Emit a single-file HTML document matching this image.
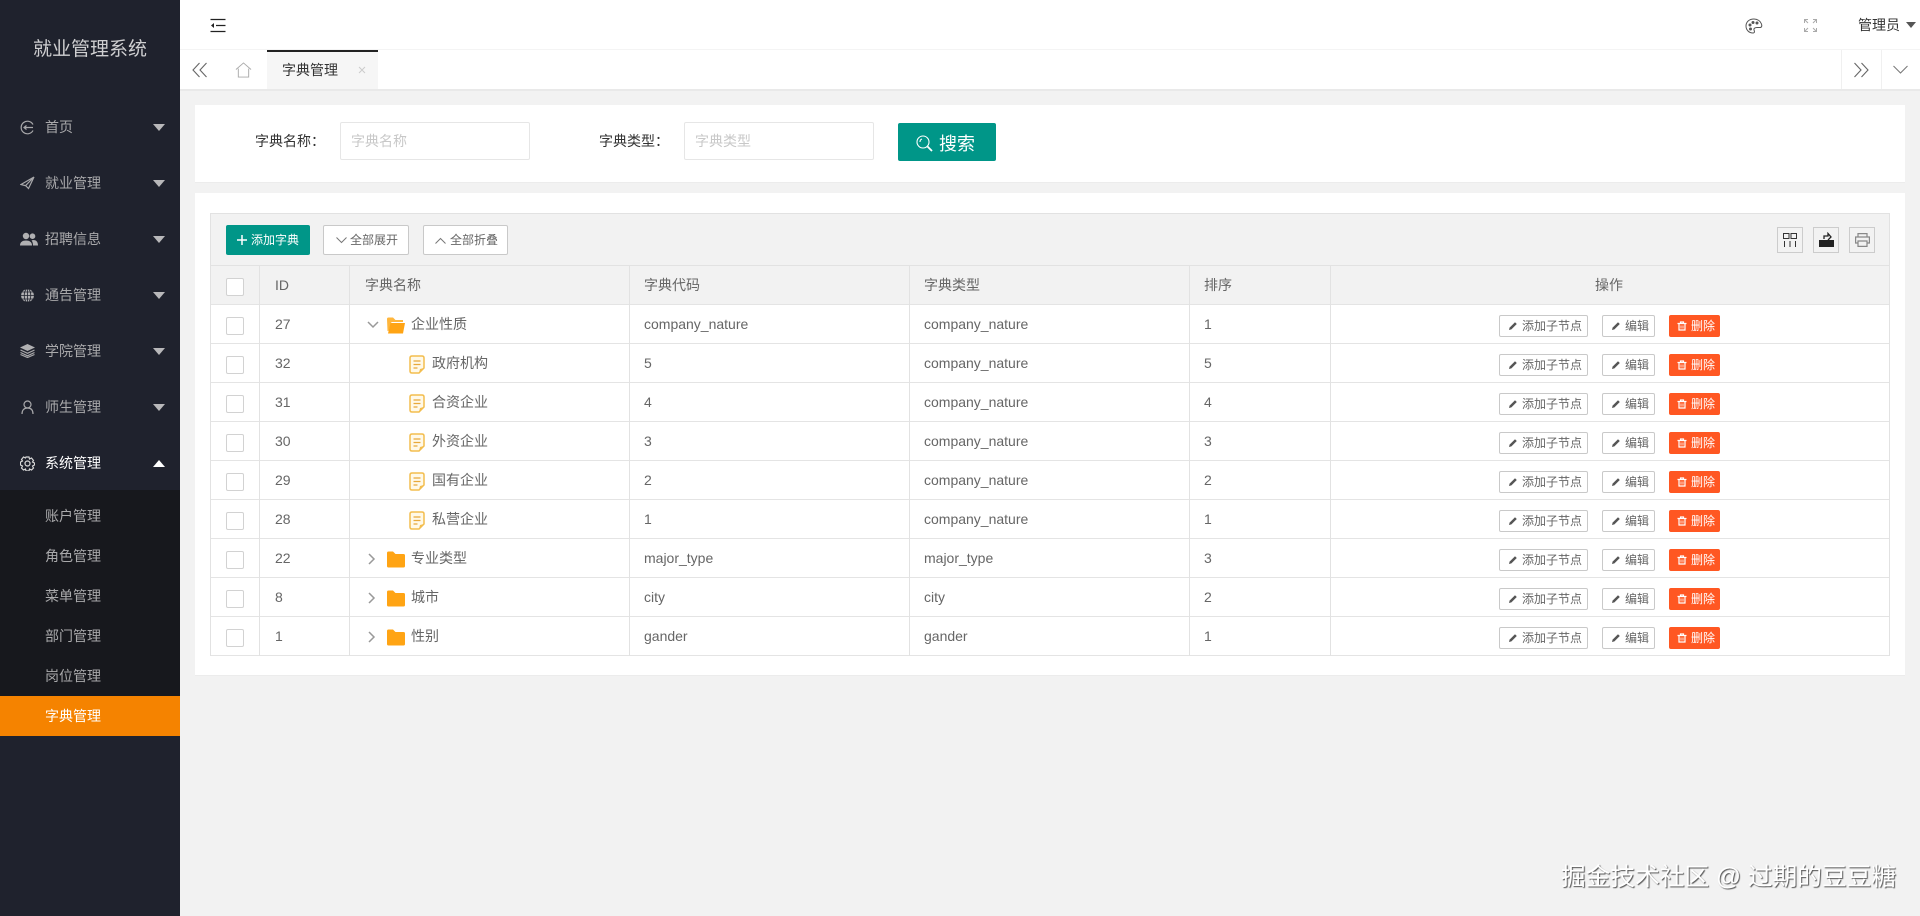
<!DOCTYPE html>
<html lang="zh-CN"><head><meta charset="utf-8"><title>字典管理</title>
<style>
*{box-sizing:border-box}
html,body{margin:0;padding:0;width:1920px;height:916px;overflow:hidden;background:#f2f2f2;font-family:"Liberation Sans","Noto Sans CJK SC",sans-serif;font-size:14px;color:#666}
.a{position:absolute}
#side{left:0;top:0;width:180px;height:916px;background:#1f222d}
.m{position:absolute;left:45px;color:#a9a9ab;line-height:20px;font-size:14px;white-space:nowrap}
.ca{position:absolute;left:153px;width:0;height:0;border-left:6.500px solid transparent;border-right:6.500px solid transparent;border-top:7px solid #b8b8ba}
.ic{position:absolute;left:20px;width:15px;height:15px;fill:none;stroke:#a8a8aa;stroke-width:1.200}
.r{position:absolute;left:210px;width:1680px;height:39px;border-bottom:1px solid #e4e4e4;line-height:39px;background:#fff;color:#666}
.r span{position:absolute;top:0;white-space:nowrap}
.cb{position:absolute;left:16px;top:12px;width:18px;height:18px;border:1px solid #d2d2d2;border-radius:2px;background:#fff}
.tr{position:absolute;width:12px;height:12px;fill:none;stroke:#999;stroke-width:1.500}
.fo{position:absolute;left:177px;top:12px;width:18px;height:17px}
.do{position:absolute;left:199px;top:11px;width:16px;height:19px}
.b{position:absolute;top:10px;height:22px;line-height:20px;font-size:12px;border:1px solid #c9c9c9;border-radius:2px;background:#fff;color:#666;white-space:nowrap}
.b span{position:absolute;top:0}
.b svg{position:absolute;left:8px;top:5px;width:10px;height:10px}
.del{background:#ff5722;border-color:#ff5722;color:#fff}
.tb{position:absolute;top:225px;height:30px;background:#fff;border:1px solid #c9c9c9;border-radius:2px;line-height:28px;font-size:12px;color:#666;white-space:nowrap}
.to{position:absolute;top:227px;width:26px;height:26px;border:1px solid #ccc;background:#f2f2f2}
.v{position:absolute;top:266px;width:1px;height:390px;background:#e2e2e2;z-index:3}
.h{position:absolute;top:266px;color:#666;line-height:39px;white-space:nowrap}
.inp{position:absolute;top:122px;width:190px;height:38px;border:1px solid #e6e6e6;border-radius:2px;background:#fff;color:#c8c8c8;line-height:36px;padding-left:10px;font-size:14px}
</style></head><body>
<svg width="0" height="0" style="position:absolute"><defs>
<symbol id="pen" viewBox="0 0 10 10"><path d="M1 9l.6-2.400L7 1.200l1.800 1.800L3.400 8.400z" fill="#555"/></symbol>
<symbol id="trash" viewBox="0 0 10 10"><path d="M.5 2.500h9M3.500 2V1h3v1M2 3v6h6V3" fill="none" stroke="#fff" stroke-width="1.200"/><path d="M4 4.500v3M6 4.500v3" stroke="#fff" stroke-width=".8"/></symbol>
<symbol id="fc" viewBox="0 0 18 17"><path d="M0 2q0-1.500 1.500-1.500h4.500l2.500 2.500h8q1.500 0 1.500 1.500v10.500q0 1.500-1.500 1.500h-15q-1.500 0-1.500-1.500z" fill="#ffa414"/></symbol>
<symbol id="fo" viewBox="0 0 18 17"><path d="M0 2q0-1.500 1.500-1.500h4.500l2.500 2.500h7.500v2h-11.500l-3 9h-1z" fill="#ffb63c"/><path d="M3.500 6h14.500l-2 10.500h-15z" fill="#ffa414"/></symbol>
<symbol id="doc" viewBox="0 0 16 19"><path d="M3 1h10q2 0 2 2v10l-5 5H3q-2 0-2-2V3q0-2 2-2z" fill="#fff9e8" stroke="#f3bd4e" stroke-width="1.500"/><path d="M4.500 6h7M4.500 9.500h7M4.500 13h4" stroke="#e8a93a" stroke-width="1.200"/><path d="M10 18l1-4 4-1z" fill="#f3bd4e"/></symbol>
</defs></svg>

<div class="a" id="side">
 <div class="a" style="left:0;top:37px;width:180px;text-align:center;color:#cfcfd1;font-size:19px;line-height:26px">就业管理系统</div>
 <svg class="ic" style="top:120px" viewBox="0 0 15 15"><path d="M13 4.500A6.300 6.300 0 1 0 13 10.500"/><path d="M4 7.500h9M6.500 5.500L4 7.500l2.500 2"/></svg><div class="m" style="top:117px">首页</div><div class="ca" style="top:124px"></div>
 <svg class="ic" style="top:176px" viewBox="0 0 15 15"><path d="M14 1L1 8.500l4.500 1.200L14 1 8.500 12.500 6 10"/></svg><div class="m" style="top:173px">就业管理</div><div class="ca" style="top:180px"></div>
 <svg class="ic" style="top:232px;left:20px;width:18px;stroke:none;fill:#b0b0b2" viewBox="0 0 18 15"><circle cx="6" cy="4" r="3.200"/><path d="M0 13.500c0-3.500 2.500-5 6-5s6 1.500 6 5z"/><circle cx="12.500" cy="4.200" r="2.800"/><path d="M13 8c3 0 5 1.500 5 5.500h-5c0-2-.5-4-1.500-5z"/></svg><div class="m" style="top:229px">招聘信息</div><div class="ca" style="top:236px"></div>
 <svg class="ic" style="top:288px;stroke:#1f222d;fill:#b0b0b2;stroke-width:.8" viewBox="0 0 15 15"><circle cx="7.500" cy="7.500" r="6.800"/><path d="M.7 7.500h13.600M2 4h11M2 11h11M7.500.7v13.600" fill="none"/><ellipse cx="7.500" cy="7.500" rx="3.300" ry="6.800" fill="none"/></svg><div class="m" style="top:285px">通告管理</div><div class="ca" style="top:292px"></div>
 <svg class="ic" style="top:343px" viewBox="0 0 15 15"><path d="M7.500 1L15 4.500 7.500 8 0 4.500z" fill="#b0b0b2" stroke="none"/><path d="M.5 7l7 3.300 7-3.300M.5 9.500l7 3.300 7-3.300M.5 11.500l7 3 7-3" stroke-width="1.200"/></svg><div class="m" style="top:341px">学院管理</div><div class="ca" style="top:348px"></div>
 <svg class="ic" style="top:400px" viewBox="0 0 15 15"><circle cx="7.500" cy="4.500" r="3.500"/><path d="M2 14c0-4 2-6 5.500-6S13 10 13 14"/></svg><div class="m" style="top:397px">师生管理</div><div class="ca" style="top:404px"></div>
 <div class="a" style="left:0;top:490px;width:180px;height:246px;background:#17181d"></div>
 <svg class="ic" style="top:456px;stroke:#d8d8d8" viewBox="0 0 15 15"><circle cx="7.500" cy="7.500" r="2.500"/><path d="M6 1h3l.5 2 2-1 2 2.500-1 1.500 2 1v2l-2 1 1 2-2 2-2-1-.5 2H6l-.5-2-2 1-2-2 1-2-2-1V6l2-1-1-1.500 2-2.500 2 1z"/></svg><div class="m" style="top:453px;color:#fff">系统管理</div><div class="a" style="left:153px;top:460px;width:0;height:0;border-left:6.500px solid transparent;border-right:6.500px solid transparent;border-bottom:7px solid #fff"></div>
 <div class="m" style="top:506px">账户管理</div>
 <div class="m" style="top:546px">角色管理</div>
 <div class="m" style="top:586px">菜单管理</div>
 <div class="m" style="top:626px">部门管理</div>
 <div class="m" style="top:666px">岗位管理</div>
 <div class="a" style="left:0;top:696px;width:180px;height:40px;background:#f58300"></div>
 <div class="m" style="top:706px;color:#fff">字典管理</div>
</div>

<!-- header -->
<div class="a" style="left:180px;top:0;width:1740px;height:50px;background:#fff;border-bottom:1px solid #f4f4f4"></div>
<svg class="a" style="left:210px;top:18px;width:16px;height:15px" viewBox="0 0 16 15" fill="none" stroke="#222" stroke-width="1.300"><path d="M.5 1.500h15M6 7.500h9.500M.5 13.500h15"/><path d="M4 5L1 7.500 4 10z" fill="#222" stroke="none"/></svg>
<svg class="a" style="left:1745px;top:18px;width:18px;height:16px" viewBox="0 0 18 16" fill="none" stroke="#555" stroke-width="1"><path d="M9 1C4 1 1 4 1 8c0 4 3 7 7 7 2 0 1.500-2 1-3-.5-1.500 1-2.500 3-2.500h3c2 0 2-2 1.500-3.500C15.500 3 12.500 1 9 1z"/><circle cx="5" cy="7" r="1" fill="#555"/><circle cx="8" cy="4.500" r="1" fill="#555"/><circle cx="12" cy="5" r="1" fill="#555"/><circle cx="5.500" cy="11" r="1" fill="#555"/></svg>
<svg class="a" style="left:1804px;top:19px;width:13px;height:13px" viewBox="0 0 13 13" fill="none" stroke="#aaa" stroke-width="1"><path d="M.5 4V.5H4M9 .5h3.500V4M12.500 9v3.500H9M4 12.500H.5V9M.5.5l3.500 3.500M12.500.5L9 4M12.500 12.500L9 9M.5 12.500L4 9"/></svg>
<div class="a" style="left:1858px;top:15px;line-height:20px;color:#333;font-size:14px">管理员</div>
<div class="a" style="left:1906px;top:22px;width:0;height:0;border-left:5.500px solid transparent;border-right:5.500px solid transparent;border-top:6px solid #555"></div>

<!-- tabs -->
<div class="a" style="left:180px;top:50px;width:1740px;height:41px;background:#fff;border-bottom:2px solid #e9e9e9"></div>
<svg class="a" style="left:192px;top:62px;width:16px;height:16px" viewBox="0 0 16 16" fill="none" stroke="#666" stroke-width="1.100"><path d="M7.500 1L1 8l6.500 7M14.500 1L8 8l6.500 7"/></svg>
<svg class="a" style="left:235px;top:62px;width:17px;height:16px" viewBox="0 0 18 17" fill="none" stroke="#aaa" stroke-width="1"><path d="M1 8l8-7 8 7M3.500 7v9h11V7"/></svg>
<div class="a" style="left:267px;top:50px;width:111px;height:39px;background:#f6f6f6;border-top:2px solid #222"></div>
<div class="a" style="left:282px;top:60px;line-height:20px;color:#333;font-size:14px">字典管理</div>
<svg class="a" style="left:358px;top:66px;width:8px;height:8px" viewBox="0 0 8 8" fill="none" stroke="#ccc" stroke-width="1"><path d="M1 1l6 6M7 1L1 7"/></svg>
<div class="a" style="left:1841px;top:50px;width:1px;height:39px;background:#f0f0f0"></div>
<div class="a" style="left:1881px;top:50px;width:1px;height:39px;background:#f0f0f0"></div>
<svg class="a" style="left:1853px;top:62px;width:16px;height:16px" viewBox="0 0 16 16" fill="none" stroke="#666" stroke-width="1.100"><path d="M1.500 1L8 8l-6.500 7M8.500 1L15 8l-6.500 7"/></svg>
<svg class="a" style="left:1893px;top:65px;width:15px;height:9px" viewBox="0 0 15 9" fill="none" stroke="#777" stroke-width="1"><path d="M.5 1L7.500 8l7-7"/></svg>

<!-- search card -->
<div class="a" style="left:195px;top:105px;width:1710px;height:78px;background:#fff;border-bottom:1px solid #ececec"></div>
<div class="a" style="left:255px;top:131px;line-height:20px;color:#333">字典名称：</div>
<div class="inp" style="left:340px">字典名称</div>
<div class="a" style="left:599px;top:131px;line-height:20px;color:#333">字典类型：</div>
<div class="inp" style="left:684px">字典类型</div>
<div class="a" style="left:898px;top:123px;width:98px;height:38px;background:#009688;border-radius:2px"></div>
<svg class="a" style="left:916px;top:135px;width:17px;height:17px" viewBox="0 0 17 17" fill="none" stroke="#fff" stroke-width="1.100"><circle cx="7" cy="7" r="6"/><path d="M11.500 11.500L16 16" stroke-width="1.800"/><path d="M4 7a3 3 0 0 1 2-3"/></svg>
<div class="a" style="left:939px;top:131px;line-height:26px;color:#fff;font-size:18px">搜索</div>

<!-- table card -->
<div class="a" style="left:195px;top:193px;width:1710px;height:483px;background:#fff;border-bottom:1px solid #ececec"></div>
<div class="a" style="left:210px;top:213px;width:1680px;height:53px;background:#f2f2f2;border:1px solid #e2e2e2"></div>
<div class="a" style="left:226px;top:225px;width:84px;height:30px;background:#009688;border-radius:2px;color:#fff;font-size:12px;line-height:30px;white-space:nowrap"><svg class="a" style="left:11px;top:10px;width:10px;height:10px" viewBox="0 0 10 10" stroke="#fff" stroke-width="1.500"><path d="M5 0v10M0 5h10"/></svg><span class="a" style="left:25px;top:0">添加字典</span></div>
<div class="tb" style="left:323px;width:86px"><svg class="a" style="left:12px;top:11px;width:11px;height:7px" viewBox="0 0 11 7" fill="none" stroke="#777"><path d="M.5.500l5 5 5-5"/></svg><span class="a" style="left:26px;top:0">全部展开</span></div>
<div class="tb" style="left:423px;width:85px"><svg class="a" style="left:11px;top:11px;width:11px;height:7px" viewBox="0 0 11 7" fill="none" stroke="#777"><path d="M.5 6.500l5-5 5 5"/></svg><span class="a" style="left:26px;top:0">全部折叠</span></div>
<div class="to" style="left:1777px"><svg class="a" style="left:5px;top:5px;width:14px;height:14px" viewBox="0 0 14 14" fill="none" stroke="#333" stroke-width="1"><path d="M.5.500h5.500v5H.5zM8 .500h5.500v5H8zM1.500 8v6M7 8v6M12.500 8v6"/></svg></div>
<div class="to" style="left:1813px"><svg class="a" style="left:5px;top:4px;width:15px;height:15px" viewBox="0 0 15 15"><path d="M0 8h15v7H0z" fill="#222"/><path d="M5 7V4h4V1.500L12 5 9 8" fill="none" stroke="#222" stroke-width="1.300"/></svg></div>
<div class="to" style="left:1849px"><svg class="a" style="left:5px;top:5px;width:15px;height:14px" viewBox="0 0 15 14" fill="none" stroke="#888" stroke-width="1.200"><path d="M3 4V.6h9V4M3 10H.6V4h13.800v6H12M3 8h9v5.400H3z"/></svg></div>

<!-- head -->
<div class="a" style="left:210px;top:266px;width:1680px;height:39px;background:#f2f2f2;border-bottom:1px solid #e4e4e4"></div>
<div class="a" style="left:226px;top:278px;width:18px;height:18px;border:1px solid #d2d2d2;border-radius:2px;background:#fff"></div>
<div class="h" style="left:275px">ID</div>
<div class="h" style="left:365px">字典名称</div>
<div class="h" style="left:644px">字典代码</div>
<div class="h" style="left:924px">字典类型</div>
<div class="h" style="left:1204px">排序</div>
<div class="h" style="left:1595px">操作</div>
<div class="v" style="left:210px"></div><div class="v" style="left:259px"></div><div class="v" style="left:349px"></div><div class="v" style="left:629px"></div><div class="v" style="left:909px"></div><div class="v" style="left:1189px"></div><div class="v" style="left:1330px"></div><div class="v" style="left:1889px"></div>

<!-- rows -->
<div class="r" style="top:305px"><i class="cb"></i><span style="left:65px">27</span><svg class="tr" style="left:157px;top:14px" viewBox="0 0 12 12"><path d="M1 3l5 5 5-5"/></svg><svg class="fo"><use href="#fo"/></svg><span style="left:201px">企业性质</span><span style="left:434px">company_nature</span><span style="left:714px">company_nature</span><span style="left:994px">1</span>
<div class="b" style="left:1289px;width:89px"><svg><use href="#pen"/></svg><span style="left:22px">添加子节点</span></div><div class="b" style="left:1392px;width:53px"><svg><use href="#pen"/></svg><span style="left:22px">编辑</span></div><div class="b del" style="left:1459px;width:51px"><svg style="left:7px"><use href="#trash"/></svg><span style="left:21px">删除</span></div></div>

<div class="r" style="top:344px"><i class="cb"></i><span style="left:65px">32</span><svg class="do"><use href="#doc"/></svg><span style="left:222px">政府机构</span><span style="left:434px">5</span><span style="left:714px">company_nature</span><span style="left:994px">5</span>
<div class="b" style="left:1289px;width:89px"><svg><use href="#pen"/></svg><span style="left:22px">添加子节点</span></div><div class="b" style="left:1392px;width:53px"><svg><use href="#pen"/></svg><span style="left:22px">编辑</span></div><div class="b del" style="left:1459px;width:51px"><svg style="left:7px"><use href="#trash"/></svg><span style="left:21px">删除</span></div></div>

<div class="r" style="top:383px"><i class="cb"></i><span style="left:65px">31</span><svg class="do"><use href="#doc"/></svg><span style="left:222px">合资企业</span><span style="left:434px">4</span><span style="left:714px">company_nature</span><span style="left:994px">4</span>
<div class="b" style="left:1289px;width:89px"><svg><use href="#pen"/></svg><span style="left:22px">添加子节点</span></div><div class="b" style="left:1392px;width:53px"><svg><use href="#pen"/></svg><span style="left:22px">编辑</span></div><div class="b del" style="left:1459px;width:51px"><svg style="left:7px"><use href="#trash"/></svg><span style="left:21px">删除</span></div></div>

<div class="r" style="top:422px"><i class="cb"></i><span style="left:65px">30</span><svg class="do"><use href="#doc"/></svg><span style="left:222px">外资企业</span><span style="left:434px">3</span><span style="left:714px">company_nature</span><span style="left:994px">3</span>
<div class="b" style="left:1289px;width:89px"><svg><use href="#pen"/></svg><span style="left:22px">添加子节点</span></div><div class="b" style="left:1392px;width:53px"><svg><use href="#pen"/></svg><span style="left:22px">编辑</span></div><div class="b del" style="left:1459px;width:51px"><svg style="left:7px"><use href="#trash"/></svg><span style="left:21px">删除</span></div></div>

<div class="r" style="top:461px"><i class="cb"></i><span style="left:65px">29</span><svg class="do"><use href="#doc"/></svg><span style="left:222px">国有企业</span><span style="left:434px">2</span><span style="left:714px">company_nature</span><span style="left:994px">2</span>
<div class="b" style="left:1289px;width:89px"><svg><use href="#pen"/></svg><span style="left:22px">添加子节点</span></div><div class="b" style="left:1392px;width:53px"><svg><use href="#pen"/></svg><span style="left:22px">编辑</span></div><div class="b del" style="left:1459px;width:51px"><svg style="left:7px"><use href="#trash"/></svg><span style="left:21px">删除</span></div></div>

<div class="r" style="top:500px"><i class="cb"></i><span style="left:65px">28</span><svg class="do"><use href="#doc"/></svg><span style="left:222px">私营企业</span><span style="left:434px">1</span><span style="left:714px">company_nature</span><span style="left:994px">1</span>
<div class="b" style="left:1289px;width:89px"><svg><use href="#pen"/></svg><span style="left:22px">添加子节点</span></div><div class="b" style="left:1392px;width:53px"><svg><use href="#pen"/></svg><span style="left:22px">编辑</span></div><div class="b del" style="left:1459px;width:51px"><svg style="left:7px"><use href="#trash"/></svg><span style="left:21px">删除</span></div></div>

<div class="r" style="top:539px"><i class="cb"></i><span style="left:65px">22</span><svg class="tr" style="left:156px;top:14px" viewBox="0 0 12 12"><path d="M3 1l5 5-5 5"/></svg><svg class="fo"><use href="#fc"/></svg><span style="left:201px">专业类型</span><span style="left:434px">major_type</span><span style="left:714px">major_type</span><span style="left:994px">3</span>
<div class="b" style="left:1289px;width:89px"><svg><use href="#pen"/></svg><span style="left:22px">添加子节点</span></div><div class="b" style="left:1392px;width:53px"><svg><use href="#pen"/></svg><span style="left:22px">编辑</span></div><div class="b del" style="left:1459px;width:51px"><svg style="left:7px"><use href="#trash"/></svg><span style="left:21px">删除</span></div></div>

<div class="r" style="top:578px"><i class="cb"></i><span style="left:65px">8</span><svg class="tr" style="left:156px;top:14px" viewBox="0 0 12 12"><path d="M3 1l5 5-5 5"/></svg><svg class="fo"><use href="#fc"/></svg><span style="left:201px">城市</span><span style="left:434px">city</span><span style="left:714px">city</span><span style="left:994px">2</span>
<div class="b" style="left:1289px;width:89px"><svg><use href="#pen"/></svg><span style="left:22px">添加子节点</span></div><div class="b" style="left:1392px;width:53px"><svg><use href="#pen"/></svg><span style="left:22px">编辑</span></div><div class="b del" style="left:1459px;width:51px"><svg style="left:7px"><use href="#trash"/></svg><span style="left:21px">删除</span></div></div>

<div class="r" style="top:617px"><i class="cb"></i><span style="left:65px">1</span><svg class="tr" style="left:156px;top:14px" viewBox="0 0 12 12"><path d="M3 1l5 5-5 5"/></svg><svg class="fo"><use href="#fc"/></svg><span style="left:201px">性别</span><span style="left:434px">gander</span><span style="left:714px">gander</span><span style="left:994px">1</span>
<div class="b" style="left:1289px;width:89px"><svg><use href="#pen"/></svg><span style="left:22px">添加子节点</span></div><div class="b" style="left:1392px;width:53px"><svg><use href="#pen"/></svg><span style="left:22px">编辑</span></div><div class="b del" style="left:1459px;width:51px"><svg style="left:7px"><use href="#trash"/></svg><span style="left:21px">删除</span></div></div>

<div class="a" style="left:1561px;top:861px;font-size:24.700px;line-height:34px;color:#fff;white-space:nowrap;text-shadow:1px 1px 1px #555">掘金技术社区 @ 过期的豆豆糖</div>
</body></html>
